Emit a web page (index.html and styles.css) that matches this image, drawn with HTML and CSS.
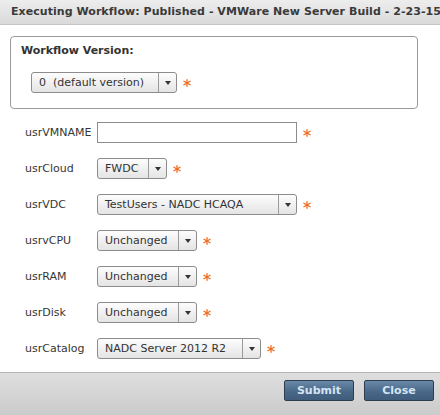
FILE: index.html
```html
<!DOCTYPE html>
<html>
<head>
<meta charset="utf-8">
<link rel="stylesheet" href="styles.css">
</head>
<body>
<div class="dialog">
  <div class="header">Executing Workflow: Published - VMWare New Server Build - 2-23-15</div>
  <div class="content">
    <div class="version-box">
      <div class="version-title">Workflow Version:</div>
      <div class="control">
        <div class="select w-version"><span class="select-text">0&nbsp;&nbsp;(default version)</span><span class="select-arrow"><span class="tri"></span></span></div>
        <svg class="req" viewBox="0 0 8 8"><g stroke="#f06a1c" stroke-width="1.3" stroke-linecap="round"><line x1="4" y1="0.7" x2="4" y2="7.3"/><line x1="0.9" y1="2.3" x2="7.1" y2="5.7"/><line x1="0.9" y1="5.7" x2="7.1" y2="2.3"/></g></svg>
      </div>
    </div>
    <div class="form">
      <div class="label">usrVMNAME</div>
      <div class="control">
        <div class="input w-200"></div>
        <svg class="req" viewBox="0 0 8 8"><g stroke="#f06a1c" stroke-width="1.3" stroke-linecap="round"><line x1="4" y1="0.7" x2="4" y2="7.3"/><line x1="0.9" y1="2.3" x2="7.1" y2="5.7"/><line x1="0.9" y1="5.7" x2="7.1" y2="2.3"/></g></svg>
      </div>
      <div class="label">usrCloud</div>
      <div class="control">
        <div class="select w-70"><span class="select-text">FWDC</span><span class="select-arrow"><span class="tri"></span></span></div>
        <svg class="req" viewBox="0 0 8 8"><g stroke="#f06a1c" stroke-width="1.3" stroke-linecap="round"><line x1="4" y1="0.7" x2="4" y2="7.3"/><line x1="0.9" y1="2.3" x2="7.1" y2="5.7"/><line x1="0.9" y1="5.7" x2="7.1" y2="2.3"/></g></svg>
      </div>
      <div class="label">usrVDC</div>
      <div class="control">
        <div class="select w-200"><span class="select-text">TestUsers - NADC HCAQA</span><span class="select-arrow"><span class="tri"></span></span></div>
        <svg class="req" viewBox="0 0 8 8"><g stroke="#f06a1c" stroke-width="1.3" stroke-linecap="round"><line x1="4" y1="0.7" x2="4" y2="7.3"/><line x1="0.9" y1="2.3" x2="7.1" y2="5.7"/><line x1="0.9" y1="5.7" x2="7.1" y2="2.3"/></g></svg>
      </div>
      <div class="label">usrvCPU</div>
      <div class="control">
        <div class="select w-100"><span class="select-text">Unchanged</span><span class="select-arrow"><span class="tri"></span></span></div>
        <svg class="req" viewBox="0 0 8 8"><g stroke="#f06a1c" stroke-width="1.3" stroke-linecap="round"><line x1="4" y1="0.7" x2="4" y2="7.3"/><line x1="0.9" y1="2.3" x2="7.1" y2="5.7"/><line x1="0.9" y1="5.7" x2="7.1" y2="2.3"/></g></svg>
      </div>
      <div class="label">usrRAM</div>
      <div class="control">
        <div class="select w-100"><span class="select-text">Unchanged</span><span class="select-arrow"><span class="tri"></span></span></div>
        <svg class="req" viewBox="0 0 8 8"><g stroke="#f06a1c" stroke-width="1.3" stroke-linecap="round"><line x1="4" y1="0.7" x2="4" y2="7.3"/><line x1="0.9" y1="2.3" x2="7.1" y2="5.7"/><line x1="0.9" y1="5.7" x2="7.1" y2="2.3"/></g></svg>
      </div>
      <div class="label">usrDisk</div>
      <div class="control">
        <div class="select w-100"><span class="select-text">Unchanged</span><span class="select-arrow"><span class="tri"></span></span></div>
        <svg class="req" viewBox="0 0 8 8"><g stroke="#f06a1c" stroke-width="1.3" stroke-linecap="round"><line x1="4" y1="0.7" x2="4" y2="7.3"/><line x1="0.9" y1="2.3" x2="7.1" y2="5.7"/><line x1="0.9" y1="5.7" x2="7.1" y2="2.3"/></g></svg>
      </div>
      <div class="label">usrCatalog</div>
      <div class="control">
        <div class="select w-164"><span class="select-text">NADC Server 2012 R2</span><span class="select-arrow"><span class="tri"></span></span></div>
        <svg class="req" viewBox="0 0 8 8"><g stroke="#f06a1c" stroke-width="1.3" stroke-linecap="round"><line x1="4" y1="0.7" x2="4" y2="7.3"/><line x1="0.9" y1="2.3" x2="7.1" y2="5.7"/><line x1="0.9" y1="5.7" x2="7.1" y2="2.3"/></g></svg>
      </div>
    </div>
  </div>
  <div class="footer">
    <button class="btn">Submit</button>
    <button class="btn">Close</button>
  </div>
</div>
</body>
</html>
```
FILE: styles.css
```css
html, body {
  margin: 0;
  padding: 0;
  background: #ffffff;
}
body {
  font-family: "DejaVu Sans", Verdana, sans-serif;
  font-size: 11px;
  color: #363636;
}
.dialog {
  width: 440px;
  height: 415px;
  display: flex;
  flex-direction: column;
  overflow: hidden;
}
.header {
  height: 24px;
  line-height: 23px;
  padding-left: 11px;
  font-weight: bold;
  font-size: 11px;
  letter-spacing: 0.05px;
  color: #3a3a3a;
  white-space: nowrap;
  background: linear-gradient(#ededed, #dadada);
  border-bottom: 1px solid #c4c4c4;
}
.content {
  flex: 1;
}
.version-box {
  margin: 11px 0 0 10px;
  width: 406px;
  height: 71px;
  border: 1px solid #9a9a9a;
  border-radius: 4px;
  box-sizing: content-box;
  padding: 0;
}
.version-title {
  margin: 7px 0 0 10px;
  font-weight: bold;
  line-height: 14px;
  color: #333;
}
.version-box .control {
  margin: 14px 0 0 20px;
}
.control {
  display: flex;
  align-items: center;
  height: 21px;
}
.form {
  margin-top: 13px;
  padding-left: 25px;
  display: grid;
  grid-template-columns: 72px auto;
  row-gap: 15px;
  align-items: center;
}
.label {
  line-height: 21px;
  white-space: nowrap;
}
.select {
  box-sizing: border-box;
  height: 21px;
  display: flex;
  border: 1px solid #8c8c8c;
  border-radius: 3px;
  background: linear-gradient(#fdfdfd, #e4e4e4);
}
.select-text {
  flex: 1;
  padding-left: 7px;
  line-height: 19px;
  white-space: nowrap;
  overflow: hidden;
  color: #333;
}
.select-arrow {
  width: 17px;
  border-left: 1px solid #9a9a9a;
  display: flex;
  align-items: center;
  justify-content: center;
}
.tri {
  width: 0;
  height: 0;
  border-left: 3.5px solid transparent;
  border-right: 3.5px solid transparent;
  border-top: 4px solid #333;
}
.input {
  box-sizing: border-box;
  height: 21px;
  border: 1px solid #8c8c8c;
  background: #ffffff;
}
.w-version { width: 146px; }
.w-70 { width: 70px; }
.w-100 { width: 100px; }
.w-164 { width: 164px; }
.w-200 { width: 200px; }
.req {
  width: 8px;
  height: 8px;
  margin-left: 6px;
}
.footer {
  height: 35px;
  border-top: 1px solid #b4b4b4;
  background: linear-gradient(#dedede, #cbcbcb);
  display: flex;
  justify-content: flex-end;
  align-items: flex-start;
  gap: 10px;
  padding: 7px 6px 0 0;
  box-sizing: content-box;
}
.btn {
  width: 70px;
  height: 21px;
  margin: 0;
  padding: 0;
  font-family: "DejaVu Sans", Verdana, sans-serif;
  font-size: 11px;
  font-weight: bold;
  color: #d4e4f2;
  border: 1px solid #2e3d4d;
  border-radius: 2px;
  background: linear-gradient(#6a88a8, #4a6888 55%, #3f5c7b);
}
```
